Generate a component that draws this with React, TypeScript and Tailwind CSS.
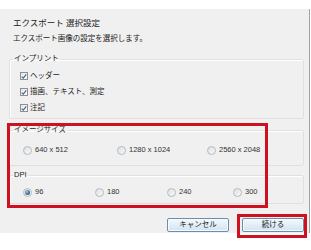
import type { ReactNode } from "react";

const font = { fontFamily: '"Liberation Sans", "Noto Sans CJK JP", sans-serif' };

// チェックボックス（Windows 7 風）
const Check = ({ label }: { label: string }) => (
	<div className="flex h-[16px] items-center pl-[10px]">
		<span className="flex h-[8px] w-[8px] items-center justify-center border border-[#8e8f8f] bg-gradient-to-br from-[#e6e6e6] to-white">
			<svg viewBox="0 0 8 8" className="h-[7px] w-[7px]">
				<path d="M1 4.2 L3 6.3 L7 1.2" fill="none" stroke="#3b5a9a" strokeWidth="1.5" />
			</svg>
		</span>
		<span className="ml-[2px] text-[7.5px] leading-none text-[#1e1e1e]">{label}</span>
	</div>
);

const Radio = ({ label, checked, width }: { label: string; checked?: boolean; width: string }) => (
	<div className={`flex items-center ${width}`}>
		<span className="flex h-[9px] w-[9px] items-center justify-center rounded-full border border-[#b3bac0] bg-gradient-to-br from-[#dce0e4] to-[#f8f8f8]">
			{checked && <span className="h-[5px] w-[5px] rounded-full bg-[radial-gradient(circle_at_35%_35%,#9fc6e6,#2b5e8e_70%)]" />}
		</span>
		<span className="ml-[3px] text-[7.5px] leading-none text-[#333]">{label}</span>
	</div>
);

const Group = ({ title, children, className }: { title: string; children: ReactNode; className: string }) => (
	<fieldset className={`w-[295px] rounded-[2px] border border-[#e0e0e0] shadow-[inset_1px_1px_0_#fff] ${className}`}>
		<legend className="ml-[3px] px-[1px] text-[7.5px] leading-[10px] text-[#1e1e1e]">{title}</legend>
		{children}
	</fieldset>
);

const Button = ({ label }: { label: string }) => (
	<button className="flex h-[14px] w-[62px] items-center justify-center rounded-[2px] border border-[#6c8eae] bg-gradient-to-b from-[#f4f9fd] to-[#d2e3f0] text-[7.5px] leading-none text-[#222] shadow-[inset_0_0_0_1px_#f7fbfe]">
		{label}
	</button>
);

export default function App() {
	return (
		<div className="relative h-[250px] w-[311px] overflow-hidden bg-white" style={font}>
			<div className="mt-[9px] h-[224px] w-[310px] border-r border-[#a3a3a3] bg-[#f0f0f0] pl-[9px] pt-[8px]">
				<div className="pl-[4px] text-[8.5px] leading-[12px] text-[#1a1a1a]">エクスポート 選択設定</div>
				<div className="mt-[5px] pl-[4px] text-[7.5px] leading-[10px] text-[#1a1a1a]">エクスポート画像の設定を選択します。</div>

				<Group title="インプリント" className="mt-[10px] pb-[2px] pt-[4px]">
					<Check label="ヘッダー" />
					<Check label="描画、テキスト、測定" />
					<Check label="注記" />
				</Group>

				<Group title="イメージサイズ" className="mt-[6px] pb-[8px] pt-[8px]">
					<div className="flex h-[14px] items-center pl-[13px]">
						<Radio label="640 x 512" width="w-[94px]" />
						<Radio label="1280 x 1024" width="w-[90px]" />
						<Radio label="2560 x 2048" width="w-[80px]" />
					</div>
				</Group>

				<Group title="DPI" className="mt-[4px] pb-[4px] pt-[5px]">
					<div className="flex h-[14px] items-center pl-[13px]">
						<Radio label="96" checked width="w-[72px]" />
						<Radio label="180" width="w-[72px]" />
						<Radio label="240" width="w-[66px]" />
						<Radio label="300" width="w-[40px]" />
					</div>
				</Group>

				<div className="mt-[14px] flex w-[295px] justify-end gap-[13px]">
					<Button label="キャンセル" />
					<Button label="続ける" />
				</div>
			</div>

			{/* 赤枠の注釈 */}
			<div className="absolute left-[7px] top-[123px] h-[85px] w-[261px] border-[3px] border-[#cf1020]" />
			<div className="absolute left-[237px] top-[214px] h-[24px] w-[70px] border-[3px] border-[#cf1020]" />
		</div>
	);
}
